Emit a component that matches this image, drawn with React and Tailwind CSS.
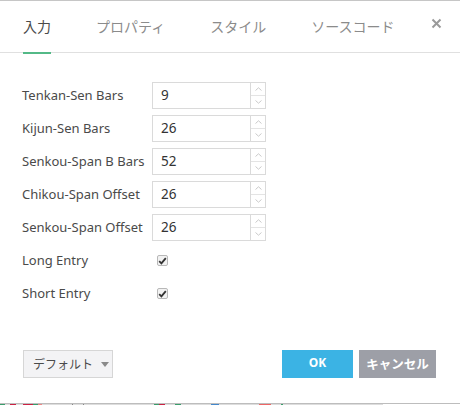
import React from "react";

const rows = [
  { label: "Tenkan-Sen Bars", value: "9" },
  { label: "Kijun-Sen Bars", value: "26" },
  { label: "Senkou-Span B Bars", value: "52" },
  { label: "Chikou-Span Offset", value: "26" },
  { label: "Senkou-Span Offset", value: "26" },
];

const checks = ["Long Entry", "Short Entry"];

function Spinner() {
  return (
    <div className="flex flex-col w-[15px] border-l border-[#dadada] h-full">
      <div className="flex-1 flex items-center justify-center border-b border-[#e4e4e4]">
        <svg width="7" height="4" viewBox="0 0 7 4"><path d="M0.5 3.5 L3.5 0.8 L6.5 3.5" fill="none" stroke="#c4c4c4" strokeWidth="0.9" /></svg>
      </div>
      <div className="flex-1 flex items-center justify-center">
        <svg width="7" height="4" viewBox="0 0 7 4"><path d="M0.5 0.5 L3.5 3.2 L6.5 0.5" fill="none" stroke="#c4c4c4" strokeWidth="0.9" /></svg>
      </div>
    </div>
  );
}

function Check() {
  return (
    <div className="w-[11px] h-[11px] border border-[#b8b8b8] rounded-[2px] bg-[#f2f2f2] flex items-center justify-center">
      <svg width="9" height="8" viewBox="0 0 9 8"><path d="M1.2 4.2 L3.4 6.4 L7.8 1.2" fill="none" stroke="#333" strokeWidth="1.8" /></svg>
    </div>
  );
}

const stripe = [
  ["#3a9e6c", 5], ["#ddd", 5], ["#c24", 6], ["#ddd", 7], ["#c24", 10], ["#3a9e6c", 5], ["#e88", 4], ["#ddd", 30], ["#888", 1], ["#ddd", 10], ["#888", 1], ["#ddd", 70], ["#3a9e6c", 5], ["#c24", 6], ["#ddd", 10], ["#3a9e6c", 6], ["#ddd", 30], ["#48c", 8], ["#ddd", 40], ["#e66", 12], ["#ddd", 10], ["#3a9e6c", 2], ["#ddd", 100],
];

export default function App() {
  const font = { fontFamily: '"Noto Sans", "Noto Sans CJK JP", sans-serif' };
  return (
    <div className="w-[460px] h-[405px] bg-white flex flex-col overflow-hidden" style={font}>
      <div className="flex-1 flex flex-col border-t border-[#c6c6c6]">
        {/* tabs */}
        <div className="h-[52px] border-b border-[#e0e0e0] flex items-stretch pl-[23px] pr-[18px] relative">
          <div className="flex gap-[45px] items-stretch">
            <div className="relative flex items-center text-[14px] text-[#4a4a4a] font-['Noto_Sans_CJK_JP',sans-serif]">
              入力
              <div className="absolute left-0 right-0 bottom-[-2px] h-[2px] bg-[#53b987]" />
            </div>
            <div className="flex items-center text-[14px] text-[#8b8b8b] font-['Noto_Sans_CJK_JP',sans-serif]">プロパティ</div>
            <div className="flex items-center text-[14px] text-[#8b8b8b] font-['Noto_Sans_CJK_JP',sans-serif]">スタイル</div>
            <div className="flex items-center text-[14px] text-[#8b8b8b] font-['Noto_Sans_CJK_JP',sans-serif]">ソースコード</div>
          </div>
          <div className="ml-auto flex items-center pb-[6px]">
            <svg width="11" height="11" viewBox="0 0 11 11"><path d="M1.5 1.5 L9.5 9.5 M9.5 1.5 L1.5 9.5" stroke="#9a9a9a" strokeWidth="2" /></svg>
          </div>
        </div>

        {/* body */}
        <div className="flex flex-col gap-[6px] pl-[22px] pt-[29px]">
          {rows.map((r) => (
            <div key={r.label} className="flex items-center h-[27px]">
              <div className="w-[130px] text-[13px] text-[#4a4a4a] whitespace-nowrap">{r.label}</div>
              <div className="w-[114px] h-[27px] border border-[#dadada] flex items-center">
                <div className="flex-1 pl-[8px] text-[13.5px] text-[#333]">{r.value}</div>
                <Spinner />
              </div>
            </div>
          ))}
          {checks.map((c) => (
            <div key={c} className="flex items-center h-[27px]">
              <div className="w-[135px] text-[13px] text-[#4a4a4a]">{c}</div>
              <Check />
            </div>
          ))}
        </div>

        {/* footer */}
        <div className="flex items-center mt-[43px] pl-[23px] pr-[24px]">
          <div className="w-[90px] h-[28px] bg-[#f3f3f5] border border-[#d6d6d6] flex items-center pl-[9px] gap-[8px] text-[12px] text-[#4a4a4a] whitespace-nowrap font-['Noto_Sans_CJK_JP',sans-serif]">
            デフォルト
            <svg width="8" height="5" viewBox="0 0 8 5"><path d="M0 0 L8 0 L4 5 Z" fill="#8a8a8a" /></svg>
          </div>
          <div className="ml-auto flex gap-[6px]">
            <div className="w-[71px] h-[28px] bg-[#3bb3e4] text-white text-[12px] font-bold flex items-center justify-center pb-[3px]">OK</div>
            <div className="w-[77px] h-[28px] bg-[#9d9fa7] text-white text-[12.5px] font-bold flex items-center justify-center whitespace-nowrap font-['Noto_Sans_CJK_JP',sans-serif]">キャンセル</div>
          </div>
        </div>
      </div>
      <div className="h-[2px] border-t border-[#bdbdbd] flex">
        {stripe.map(([c, w], i) => (
          <div key={i} style={{ background: c, width: w }} className="h-[1px]" />
        ))}
      </div>
    </div>
  );
}
